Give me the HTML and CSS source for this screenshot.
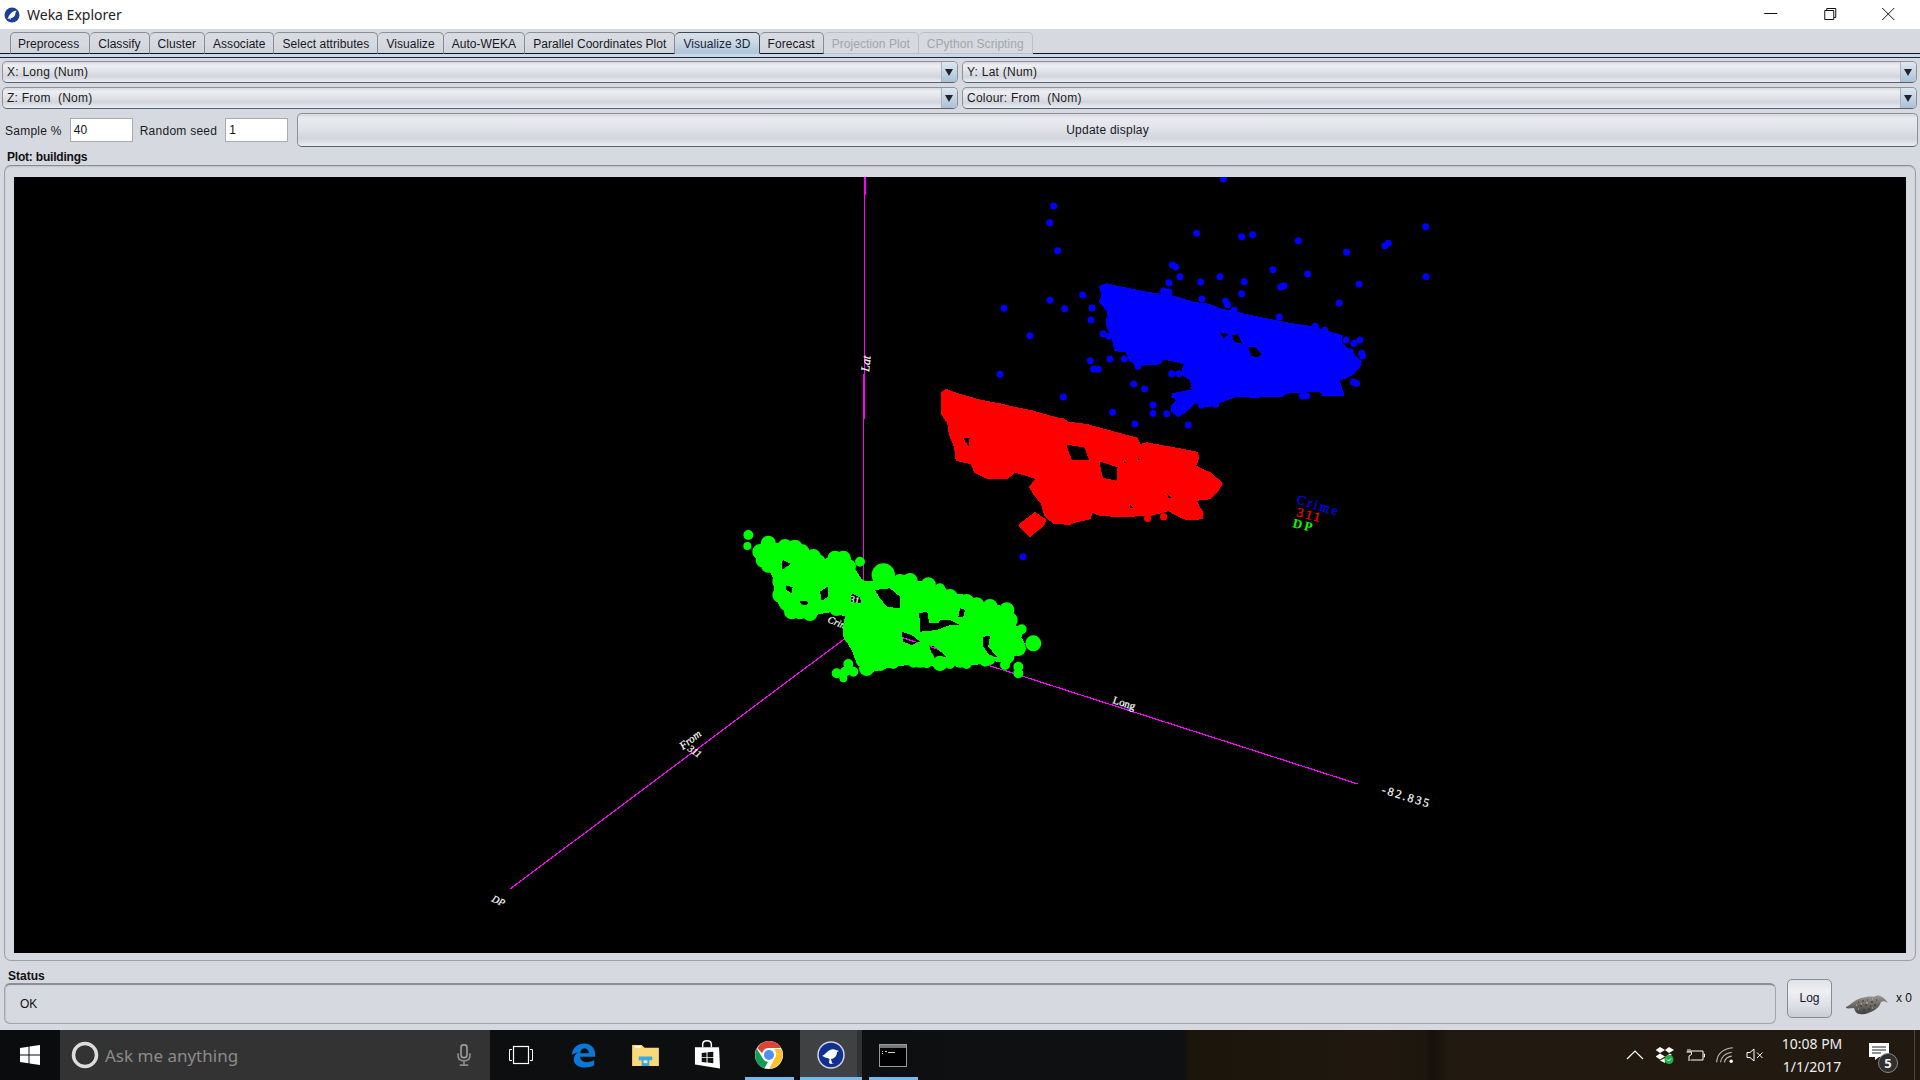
FILE: index.html
```html
<!DOCTYPE html>
<html lang="en">
<head>
<meta charset="utf-8">
<title>Weka Explorer</title>
<link rel="stylesheet" href="styles.css">
</head>
<body>
<div class="app">
  <header class="titlebar">
    <svg class="app-icon" viewBox="0 0 16 16"><circle cx="8" cy="8" r="7.5" fill="#1c3f8f"/><path d="M3.5 12C5 9 6 6 9 4.5l3.5-1-1 2.5c0 3-2.5 5-5 5L7 13l-1.500-1.500z" fill="#fff"/></svg>
    <span class="title-text">Weka Explorer</span>
    <div class="win-controls">
      <svg class="win-btn" viewBox="0 0 58 29"><path d="M22 13.500h13" stroke="#111" fill="none"/></svg>
      <svg class="win-btn" viewBox="0 0 58 29"><path d="M24.500 10.500h9v9h-9zM26.500 10.500v-2h9v9h-2" stroke="#111" fill="none"/></svg>
      <svg class="win-btn" viewBox="0 0 58 29"><path d="M23 8l12 12M35 8L23 20" stroke="#111" fill="none"/></svg>
    </div>
  </header>

  <main class="explorer">
    <nav class="tabs">
      <span class="tab">Preprocess</span>
      <span class="tab">Classify</span>
      <span class="tab">Cluster</span>
      <span class="tab">Associate</span>
      <span class="tab">Select attributes</span>
      <span class="tab">Visualize</span>
      <span class="tab">Auto-WEKA</span>
      <span class="tab">Parallel Coordinates Plot</span>
      <span class="tab tab-active">Visualize 3D</span>
      <span class="tab">Forecast</span>
      <span class="tab tab-disabled">Projection Plot</span>
      <span class="tab tab-disabled">CPython Scripting</span>
    </nav>
    <div class="tab-strip"></div>

    <section class="combos">
      <div class="combo"><span class="combo-label">X: Long (Num)</span><span class="combo-arrow"></span></div>
      <div class="combo"><span class="combo-label">Y: Lat (Num)</span><span class="combo-arrow"></span></div>
      <div class="combo"><span class="combo-label">Z: From  (Nom)</span><span class="combo-arrow"></span></div>
      <div class="combo"><span class="combo-label">Colour: From  (Nom)</span><span class="combo-arrow"></span></div>
    </section>

    <section class="options">
      <span class="opt-label">Sample %</span>
      <span class="field">40</span>
      <span class="opt-label opt-seed">Random seed</span>
      <span class="field">1</span>
      <span class="update-btn">Update display</span>
    </section>

    <div class="plot-label">Plot: buildings</div>
    <section class="plot-panel">
      <svg class="plot" viewBox="14 177 1892 776" preserveAspectRatio="none">
        <rect x="14" y="177" width="1892" height="776" fill="#000"/>
        <g class="axes">
          <path d="M865 177L863 625"/>
          <path d="M510 889L863 625"/>
          <path d="M863 625L1358 784"/>
        </g>
        <g class="axis-text">
          <text class="it" transform="translate(869 372) rotate(-84)">Lat</text>
          <text class="t-11" transform="translate(1112 703) rotate(18)">Long</text>
          <text class="t-12 wide" transform="translate(1381 793) rotate(17)">-82.835</text>
          <text class="t-11 it" transform="translate(683 750) rotate(-38)">From</text>
          <text class="t-10 it" transform="translate(687 750) rotate(35)">311</text>
          <text class="t-10 it" transform="translate(491 901) rotate(25)">DP</text>
          <text class="t-10 it" transform="translate(827 622) rotate(22)">Crime</text>
          <text class="t-10" transform="translate(849 602) rotate(15)">311</text>
        </g>

        <!-- blue cluster, coordinates at 3x from (920,170) -->
        <g transform="translate(920 170) scale(.33333)">
          <path class="blob" fill="#00f" stroke="#00f" fill-rule="evenodd" d="M540 350L560 343 600 352 680 368 760 380 820 398 870 405 900 418 950 428 1000 440 1050 450 1110 462 1180 472 1220 485 1265 498 1262 520 1280 535 1295 545 1305 560 1322 575 1318 590 1300 610 1280 622 1255 630 1262 650 1270 675 1210 675 1200 662 1100 668 1085 678 1000 680 950 678 900 695 885 705 850 710 825 695 820 670 813 630 785 610 795 580 730 565 720 580 650 585 630 570 620 545 585 540 578 500 560 465 565 425 540 395 548 375Z M892 482L930 490 912 510Z M932 492L955 490 972 526 940 518Z M980 528L1008 528 1028 552 1016 566 992 560Z"/>
          <path class="blob" fill="#00f" stroke="#00f" d="M760 672L810 662 828 672 825 695 800 722 775 738 757 725 757 708 775 690 757 680Z"/>
          <path class="dots" stroke="#00f" stroke-width="21" d="M910 27h0M401 108h0M389 158h0M413 242h0M830 190h0M965 200h0M998 194h0M1135 212h0M1517 170h0M1280 247h0M1395 227h0M1405 220h0M1518 320h0M757 285h0M767 291h0M780 320h0M747 338h0M842 336h0M900 320h0M973 335h0M1059 299h0M1163 312h0M1082 351h0M1092 347h0M1317 343h0M731 363h0M747 366h0M488 375h0M390 391h0M252 415h0M434 416h0M516 414h0M513 450h0M846 387h0M965 371h0M917 394h0M923 404h0M943 420h0M1258 399h0M1078 441h0M1186 469h0M1214 481h0M1278 510h0M1320 510h0M1302 520h0M1290 545h0M1325 550h0M1328 558h0M330 497h0M549 491h0M567 499h0M511 572h0M570 567h0M613 567h0M521 597h0M535 598h0M654 589h0M240 613h0M755 611h0M776 611h0M641 642h0M674 657h0M1300 636h0M1310 640h0M1147 678h0M1160 678h0M430 681h0M699 705h0M699 730h0M578 727h0M740 731h0M645 762h0M805 765h0M845 705h0M887 703h0M309 1160h0"/>
        </g>

        <!-- red cluster, coordinates at 3x from (920,380) -->
        <g transform="translate(920 380) scale(.33333)">
          <path class="blob" fill="#f00" stroke="#f00" fill-rule="evenodd" d="M65 40L78 30 110 42 180 62 250 75 290 85 340 95 410 115 430 118 445 128 500 135 610 165 650 175 660 195 680 190 780 208 830 218 835 235 825 258 870 280 905 310 890 335 870 355 825 360 848 400 845 415 800 418 770 405 745 390 730 395 690 405 600 408 540 405 515 395 510 415 465 425 450 432 400 428 375 405 365 370 345 345 330 322 350 295 320 285 285 275 260 295 200 293 165 275 155 250 110 240 105 200 90 165 85 130 65 100Z M126 172L152 172 148 208 136 190Z M434 190L496 200 512 244 454 244Z M534 240L596 260 592 306 546 296Z M608 234L628 252 608 254Z M648 225L668 240 652 244Z M736 330L764 362 742 356Z M628 368L648 386 628 388Z"/>
          <path class="blob" fill="#f00" stroke="#f00" d="M298 435L345 400 375 420 370 435 330 467Z"/>
          <path class="dots" stroke="#f00" stroke-width="22" d="M97 155h0M683 415h0M731 410h0"/>
        </g>

        <!-- green cluster, coordinates at 3x from (720,510) -->
        <g transform="translate(720 510) scale(.33333)">
          <path fill="#0f0" fill-rule="evenodd" d="M100 130L150 100 200 100 250 125 290 150 350 140 400 170 430 215 470 210 520 210 570 210 625 215 660 240 700 250 740 255 800 280 860 290 885 340 900 375 915 400 900 430 880 440 860 460 800 450 770 465 700 465 660 470 560 465 500 475 440 490 410 460 395 420 370 380 370 340 375 320 340 305 260 320 215 325 180 290 160 250 165 215 150 185 110 150Z M188 150L210 160 205 178 185 178Z M195 225L218 232 215 250 200 240Z M300 245L325 228 325 260 305 272Z M240 272L265 275 262 285 243 285Z M395 250L420 262 425 280 392 278Z M465 240L510 235 540 260 540 295 500 290 480 265Z M598 310L622 305 628 340 656 340 660 330 690 330 720 345 690 345 650 360 600 365Z M545 365L575 375 600 395 575 405 550 395Z M625 400L650 415 680 440 640 445Z M790 380L810 378 805 410 830 440 810 440 790 410Z M720 295L735 300 730 320 715 320Z"/>
          <path class="dots" stroke="#0f0" stroke-width="46" d="M145 165h0M130 150h0M150 125h0M120 125h0M145 100h0M195 110h0M225 112h0M215 135h0M245 125h0M280 140h0M240 165h0M210 190h0M280 170h0M345 145h0M370 145h0M355 165h0M385 170h0M330 180h0M350 190h0M390 195h0M280 195h0M260 215h0M180 215h0M300 210h0M340 210h0M380 225h0M420 230h0M180 255h0M200 280h0M215 305h0M240 305h0M270 310h0M340 275h0M350 295h0M540 215h0M570 212h0M625 225h0M590 260h0M565 260h0M640 255h0M600 275h0M660 250h0M690 260h0M400 300h0M450 260h0M460 290h0M400 330h0M450 340h0M500 320h0M540 340h0M560 325h0M575 340h0M395 380h0M430 400h0M480 400h0M520 405h0M430 450h0M470 440h0M520 430h0M440 475h0M480 460h0M560 430h0M620 445h0M600 450h0M740 275h0M770 285h0M810 290h0M860 300h0M870 330h0M885 370h0M745 340h0M700 370h0M660 385h0M635 385h0M685 410h0M730 400h0M765 385h0M820 340h0M790 330h0M845 400h0M860 440h0M720 450h0M780 440h0M895 415h0M660 460h0"/>
          <path class="dots" stroke="#0f0" stroke-width="30" d="M85 75h0M300 150h0M420 155h0M660 235h0M905 358h0M385 462h0M350 490h0M400 485h0M375 485h0M795 455h0M895 470h0M895 490h0M855 465h0M700 305h0M520 462h0M580 458h0M620 460h0M690 462h0M740 462h0M810 450h0"/>
          <path class="dots" stroke="#0f0" stroke-width="24" d="M82 108h0M370 505h0M640 322h0M672 315h0"/>
          <path class="dots" stroke="#0f0" stroke-width="48" d="M940 400h0"/>
          <path class="dots" stroke="#0f0" stroke-width="70" d="M490 195h0"/>
        </g>

        <g class="legend">
          <text class="l-blue" transform="translate(1296 503) rotate(17)">Crime</text>
          <text class="l-red" transform="translate(1296 516) rotate(14)">311</text>
          <text class="l-green" transform="translate(1292 527) rotate(14)">DP</text>
        </g>
      </svg>
    </section>

    <section class="status-area">
      <div class="status-col">
        <div class="status-label">Status</div>
        <div class="status-box">OK</div>
      </div>
      <div class="status-side">
        <span class="log-btn">Log</span>
        <svg class="bird" viewBox="0 0 44 22">
          <defs><linearGradient id="birdFill" x1="0" y1="0" x2="0" y2="1"><stop offset="0" stop-color="#9a9691"/><stop offset="1" stop-color="#403f3d"/></linearGradient></defs>
          <path d="M0 14C5 12 8 7 15 5c5-1 9-2 13-1 2-2 6-2 8 0 2 1 4 3 6 6-3-2-5-2-7-1-1 4-4 7-8 9-5 2-8 4-13 3-3 0-5-2-6-6-3 0-6 1-8 0z" fill="url(#birdFill)"/>
          <path d="M12 9h1M16 8h2M21 7h1M25 9h2M14 13h2M19 12h2M24 13h1M28 12h2M17 17h2M22 16h2M30 7h1" stroke="#2e2d2c" fill="none"/>
          <path d="M10 12h1M15 11h1M20 10h2M26 6h1M12 16h1M26 15h1" stroke="#c4c0ba" fill="none"/>
        </svg>
        <span class="x-count">x 0</span>
      </div>
    </section>
  </main>

  <footer class="taskbar">
    <div class="start">
      <svg viewBox="0 0 20 20" class="ico-20"><path d="M0 3l8.500-1.200V9.500H0zM9.500 1.600L20 0v9.500H9.500zM0 10.500h8.500v7.700L0 17zM9.500 10.500H20V20L9.500 18.400z" fill="#fff"/></svg>
    </div>
    <div class="search">
      <svg class="cortana" viewBox="0 0 28 28"><circle cx="14" cy="14" r="11.500" fill="none" stroke="#dcdcdc" stroke-width="3.500"/></svg>
      <span class="search-text">Ask me anything</span>
      <svg class="mic" viewBox="0 0 16 26"><rect x="4.500" y="1" width="7" height="15" rx="3" fill="none" stroke="#9a9a9a" stroke-width="2"/><path d="M1 11v3c0 4 3 6 7 6s7-2 7-6v-3M8 20v4M3 25h10" fill="none" stroke="#8a8a8a" stroke-width="2"/></svg>
    </div>
    <div class="tb-apps">
      <div class="tb-app">
        <svg class="ico-24" viewBox="0 0 24 24"><path d="M3 6.500H.5v11H3M21 6.500h2.500v11H21" fill="none" stroke="#fff"/><rect x="4.500" y="3.500" width="15" height="17" fill="none" stroke="#fff" stroke-width="1.200"/></svg>
      </div>
      <div class="tb-app">
        <svg class="ico-edge" viewBox="0 0 28 28"><path d="M1 13C2 5 8 1 15 1c7 0 12 5 12 12v3H10c.5 4 3.500 6 7.500 6 3 0 6-1 8.500-2.500v6c-3 1.600-6 2.500-10 2.500-8 0-13-4-13-9 0-3 2-6 5-8-3.500 1-5 2-7.500 3zm9.500-1h9.500c0-3-2-5.500-5-5.500s-4.500 2.500-4.500 5.500z" fill="#0a78d7"/></svg>
      </div>
      <div class="tb-app">
        <svg class="ico-folder" viewBox="0 0 28 23"><path d="M0 1h10l3 3h15v19H0z" fill="#fbd878"/><path d="M3 2h6v2H3z" fill="#fff"/><path d="M7 13h14v4h-3v6h-8v-6H7z" fill="#3aa7e6"/><path d="M12 17h4v3h-4z" fill="#fbe9a8"/></svg>
      </div>
      <div class="tb-app">
        <svg class="ico-store" viewBox="0 0 28 30"><path d="M9 8V5c0-5 9-5 9 0v3" fill="none" stroke="#fff" stroke-width="1.500"/><path d="M1 8h25l1 22L1 26z" fill="#fff"/><path d="M8 14l5-.6v4.800H8zM14 13.300l6-.6v5.500h-6zM8 19h5v4.800l-5-.6zM14 19h6v5.600l-6-.7z" fill="#111"/></svg>
      </div>
      <div class="tb-app tb-open">
        <svg class="ico-28" viewBox="0 0 28 28"><circle cx="14" cy="14" r="14" fill="#fff"/><path d="M14 0a14 14 0 0 1 12.100 7H14a7 7 0 0 0-6.800 5.200L2.200 7A14 14 0 0 1 14 0z" fill="#db4437"/><path d="M1.800 7.400l6.200 10.600a7 7 0 0 0 5 3l-3.600 6.200A14 14 0 0 1 1.800 7.400z" fill="#0f9d58"/><path d="M26.400 8H19a7 7 0 0 1 1 9l-6 10.900A14 14 0 0 0 26.400 8z" fill="#fbc02d"/><circle cx="14" cy="14" r="6.500" fill="#fff"/><circle cx="14" cy="14" r="5" fill="#4f8ff0"/></svg>
      </div>
      <div class="tb-app tb-open tb-current">
        <svg class="ico-28" viewBox="0 0 28 28"><circle cx="14" cy="14" r="13" fill="#12308f" stroke="#cfd3e4" stroke-width="1.500"/><path d="M5 15c3-1 5-5 8-6 2-1 4-1 6 0l3 1-2 1c0 4-3 7-6 7l1 4h2l-3 1-2-1 .5-4-2-1c-2 0-3-1-5-2z" fill="#fff"/></svg>
      </div>
      <div class="tb-app tb-open">
        <svg class="ico-cmd" viewBox="0 0 28 23"><rect x=".5" y=".5" width="27" height="22" fill="#000" stroke="#9a9a9a"/><rect x="1" y="1" width="26" height="3" fill="#777"/><path d="M3 7h1v1H3zM3 9h1v1H3zM6 7h2v1H6zM9 8h7v1H9z" fill="#ccc"/></svg>
      </div>
    </div>
    <div class="tray">
      <div class="tray-item"><svg class="ico-18" viewBox="0 0 18 10"><path d="M1 9l8-8 8 8" fill="none" stroke="#fff" stroke-width="1.200"/></svg></div>
      <div class="tray-item"><svg class="ico-18" viewBox="0 0 18 18"><path d="M4 1L9 4 4 7-.5 4zM13 1L18 4 13 7 9 4zM4 7.500L9 10.500 4 13.500-.5 10.500zM14 7.500L16 9 9 11z" fill="#fff"/><path d="M4 14.500L9 17V12z" fill="#fff"/><circle cx="13" cy="13.500" r="4.500" fill="#22b14c"/><path d="M11 13.500l1.500 1.500 2.500-2.500" fill="none" stroke="#fff"/></svg></div>
      <div class="tray-item"><svg class="ico-20" viewBox="0 0 20 14"><path d="M3 1v3M5 1v3M1.500 4h5v2.500L4 8v5" fill="none" stroke="#fff"/><path d="M6 3h12v9H5.500M18.500 6h1v3h-1" fill="none" stroke="#fff"/></svg></div>
      <div class="tray-item"><svg class="ico-18" viewBox="0 0 16 15"><path d="M.5 14C1 7 6 2 15 1M4 14c.5-5 4-8 10-9M7.500 14c.5-3 3-5 6.500-5.500" fill="none" stroke="#bbb"/><circle cx="13.500" cy="13" r="1.500" fill="#fff"/></svg></div>
      <div class="tray-item"><svg class="ico-18" viewBox="0 0 18 14"><path d="M1 4.500h3L8 1v12L4 9.500H1z" fill="none" stroke="#fff"/><path d="M11 4.500l5.500 5.500M16.500 4.500L11 10" stroke="#fff" fill="none"/></svg></div>
      <div class="clock"><span>10:08 PM</span><span>1/1/2017</span></div>
      <div class="notify">
        <svg class="note" viewBox="0 0 20 17"><path d="M0 0h20v14H10l-4 3v-3H0z" fill="#fff"/><path d="M3 4h14M3 7h14M3 10h9" stroke="#222" fill="none"/></svg>
        <span class="badge">5</span>
      </div>
      <div class="show-desktop"></div>
    </div>
  </footer>
</div>
</body>
</html>
```
FILE: styles.css
```css
* { box-sizing: border-box; }
html, body { margin: 0; padding: 0; width: 1920px; height: 1080px; overflow: hidden; }
body { font-family: "Liberation Sans", Arial, sans-serif; font-size: 12px; color: #111; background: #d6d9df; }
.app { display: flex; flex-direction: column; height: 1080px; }

.titlebar { display: flex; align-items: center; height: 29px; background: #fff; padding-left: 4px; flex: none; }
.app-icon { width: 16px; height: 16px; flex: none; }
.title-text { margin-left: 7px; font-family: "Noto Sans", sans-serif; font-size: 14px; color: #222; }
.win-controls { margin-left: auto; display: flex; padding-right: 3px; }
.win-btn { width: 58.5px; height: 29px; display: block; }

.explorer { flex: 1; display: flex; flex-direction: column; background: #d6d9df; min-height: 0; }

.tabs { display: flex; height: 25px; padding: 3px 0 0 10px; border-bottom: 1px solid #10131a; flex: none; }
.tab { height: 22px; margin-bottom: -1px; padding: 0 8px; line-height: 22px; white-space: pre; letter-spacing: .05px; color: #17171f;
  border: 1px solid #8b8d94; border-bottom: 1px solid #10131a; border-left-width: 0; border-radius: 5px 5px 0 0;
  background: linear-gradient(#d8dbe1, #d6d9df 55%, #cdd1d9); }
.tab:first-child { border-left-width: 1px; padding: 0 10px 0 7px; }
.tab-active { color: #14253a; border-color: #3d4a5c; border-bottom-color: #b3c8dc; background: linear-gradient(#d9dfe6, #cdd8e3 45%, #aec6dc); }
.tab-disabled { color: #a3a5ab; border-color: #bcbfc6; border-bottom-color: #bcbfc6; background: #d6d9df; }
.tab-strip { height: 4px; background: #c9d8e8; border-bottom: 1px solid #1b2740; flex: none; }

.combos { display: grid; grid-template-columns: 956px 955px; column-gap: 4px; row-gap: 4px; padding: 3px 3px 0 2px; flex: none; }
.combo { height: 22px; display: flex; border: 1px solid #8f9197; border-bottom-color: #5a6070; border-radius: 5px;
  background: linear-gradient(#d7dae0, #eceef2 18%, #dfe1e6 50%, #d2d5dc 72%, #e9ecf2); overflow: hidden; }
.combo-label { flex: 1; padding-left: 4px; line-height: 21px; white-space: pre; letter-spacing: .25px; color: #1b1b23; }
.combo-arrow { position: relative; width: 16px; background: linear-gradient(#dfe7ef, #c5d4e3 50%, #a9c1d8); border-left: 1px solid #aab4c0; }
.combo-arrow::after { content: ""; position: absolute; left: 3px; top: 7px; border: 4px solid transparent; border-top: 7px solid #20232b; border-bottom: 0; }

.options { display: flex; align-items: center; height: 34px; margin-top: 4px; padding: 0 2px 0 5px; line-height: 18px; flex: none; }
.opt-label { color: #1b1b23; white-space: pre; letter-spacing: .25px; padding-top: 2px; }
.opt-seed { margin-left: 7px; }
.field { width: 63px; height: 24px; margin-left: 8px; padding-left: 3px; line-height: 23px; background: #fff; border: 1px solid #a9abb0; color: #111; }
.update-btn { flex: 1; height: 34px; margin-left: 9px; text-align: center; line-height: 33px; letter-spacing: .25px; color: #17171f;
  border: 1px solid #8f9197; border-bottom-color: #5a6070; border-radius: 5px;
  background: linear-gradient(#d7dae0, #e9ebef 15%, #dfe1e6 50%, #d2d5dc 76%, #eaedf3); }

.plot-label { height: 18px; padding-left: 7px; line-height: 21px; font-weight: 700; font-size: 12px; letter-spacing: -.2px; flex: none; }
.plot-panel { height: 796px; margin: 0 4px; padding: 11px 9px 7px; border: 1px solid #9ea0a7; border-top-color: #8a8c92; border-radius: 7px; box-shadow: inset 0 1px 1px #c0c3ca; flex: none; }
.plot { display: block; width: 1892px; height: 776px; shape-rendering: crispEdges; }
.axes path { stroke: #f0f; stroke-width: 1.2; fill: none; }
.blob { stroke-width: 6; stroke-linejoin: round; }
.dots { fill: none; stroke-linecap: round; shape-rendering: auto; }
.plot text { font-family: "Liberation Serif", serif; font-size: 12px; }
.axis-text text { fill: #fff; stroke: #fff; stroke-width: .2px; font-size: 12px; }
.axis-text .t-11 { font-size: 11px; }
.axis-text .t-12 { font-size: 12px; }
.axis-text .t-10 { font-size: 10px; }
.axis-text .it { font-style: italic; }
.axis-text .wide { letter-spacing: 2px; }
.legend text { font-size: 13px; letter-spacing: 2.4px; stroke-width: .3px; }
.legend .l-blue { fill: #00f; stroke: #00f; }
.legend .l-red { fill: #f00; stroke: #f00; }
.legend .l-green { fill: #0f0; font-weight: 700; }

.status-area { flex: 1; display: flex; min-height: 0; }
.status-col { width: 1776px; padding-left: 4px; display: flex; flex-direction: column; }
.status-label { height: 22px; padding-left: 4px; line-height: 30px; font-weight: 700; font-size: 12px; }
.status-box { height: 41px; padding-left: 15px; line-height: 39px; border: 1px solid #a3a5ac; border-top: 2px solid #8c8e95; border-radius: 6px; box-shadow: inset 1px 0 1px #bfc2c9; }
.status-side { display: flex; align-items: flex-start; padding: 18px 0 0 11px; }
.log-btn { width: 45px; height: 39px; text-align: center; line-height: 36px; border: 1px solid #8a8c93; border-radius: 5px; background: linear-gradient(#e0e2e7, #eef0f3 30%, #dcdfe5 70%, #c9ccd3); color: #15152a; }
.bird { width: 44px; height: 22px; margin: 14px 0 0 14px; flex: none; }
.x-count { margin: 12px 0 0 6px; font-size: 12px; white-space: pre; }

.taskbar { height: 50px; display: flex; flex: none; background: linear-gradient(90deg, #0b0c0d, #0e1012 61.7%, #1c150c 61.9%, #20180f 72%, #1d160d 74.2%, #15100a 74.6%, #221a10 75.5%, #221a11 100%); }
.start { width: 60px; display: flex; align-items: center; justify-content: center; }
.ico-20 { width: 20px; height: 20px; }
.start .ico-20 { margin-left: -1px; }
.search { width: 430px; background: #333; display: flex; align-items: center; padding-left: 11px; }
.cortana { width: 28px; height: 28px; flex: none; }
.search-text { margin-left: 6px; font-family: "Noto Sans", sans-serif; font-size: 17px; color: #8b8b8b; }
.mic { width: 14px; height: 22px; margin-left: auto; margin-right: 19px; }
.tb-apps { display: flex; }
.tb-app { position: relative; width: 62px; display: flex; align-items: center; justify-content: center; }
.tb-open::after { content: ""; position: absolute; left: 7px; right: 6px; bottom: 0; height: 3px; background: #76b9ed; }
.tb-current { background: #3f4143; box-shadow: inset -5px 0 0 #2f3133; }
.tb-current::after { left: 0; right: 0; }
.ico-24 { width: 24px; height: 24px; }
.ico-28 { width: 28px; height: 28px; }
.ico-18 { width: 18px; height: 18px; }
.ico-edge { width: 25px; height: 26px; }
.ico-folder { width: 27px; height: 22px; }
.ico-store { width: 27px; height: 30px; margin-top: -2px; }
.ico-cmd { width: 28px; height: 23px; }
.tray { margin-left: auto; display: flex; }
.tray-item { width: 30px; display: flex; align-items: center; justify-content: center; }
.clock { width: 84px; display: flex; flex-direction: column; align-items: center; justify-content: center; gap: 5px; font-family: "Noto Sans", sans-serif; font-size: 14px; line-height: 18px; color: #eee; }
.notify { position: relative; width: 50px; display: flex; align-items: center; justify-content: center; }
.note { width: 20px; height: 17px; margin-top: -7px; }
.badge { position: absolute; left: 24px; top: 23px; width: 20px; height: 20px; border-radius: 50%; background: #2f2f2f; border: 1px solid #888; text-align: center; line-height: 18px; font-family: "Noto Sans", sans-serif; font-size: 13px; font-weight: 700; color: #eee; }
.show-desktop { border-right: 1px solid #4a453e; margin-right: 5px; width: 11px; }
```
